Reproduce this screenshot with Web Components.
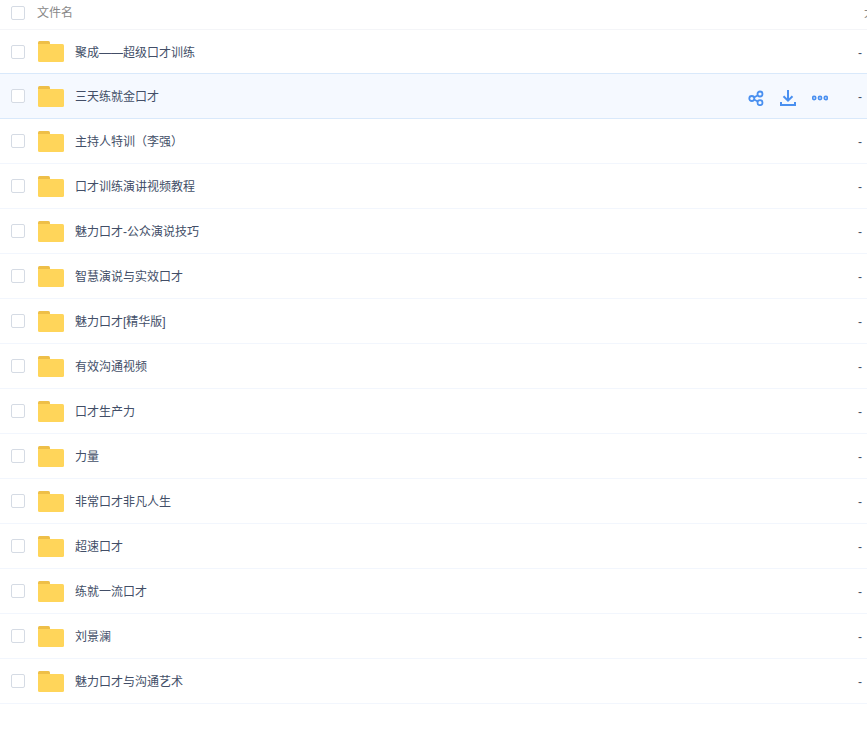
<!DOCTYPE html>
<html lang="zh-CN">
<head>
<meta charset="utf-8">
<title>文件列表</title>
<style>
  html, body { margin: 0; background: #fff; }
  body {
    overflow-x: hidden;
    color: #424e67;
    font: 12px/16px "Liberation Sans", "Noto Sans CJK SC", sans-serif;
  }
</style>
</head>
<body>
<file-list active="1">
  <span slot="name-heading">文件名</span>
  <span slot="size-heading">大小</span>
</file-list>

<script>
(function (global) {
  'use strict';

  var files = [
    '聚成——超级口才训练',
    '三天练就金口才',
    '主持人特训（李强）',
    '口才训练演讲视频教程',
    '魅力口才-公众演说技巧',
    '智慧演说与实效口才',
    '魅力口才[精华版]',
    '有效沟通视频',
    '口才生产力',
    '力量',
    '非常口才非凡人生',
    '超速口才',
    '练就一流口才',
    '刘景澜',
    '魅力口才与沟通艺术'
  ];

  class FolderIcon extends HTMLElement {
    constructor() {
      super();
      this.attachShadow({ mode: 'open' }).innerHTML = [
        '<style>',
        ':host{display:block;flex:none;width:26px;height:21px}',
        'svg{display:block}',
        '</style>',
        '<svg width="26" height="21" viewBox="0 0 26 21" aria-hidden="true">',
        '<path fill="#eebf48" d="M0 4V1.5Q0 0 1.5 0H10.5Q12 0 12 1.5V4Z"/>',
        '<path fill="#ffd55a" d="M0 3H24.5Q26 3 26 4.5V19.5Q26 21 24.5 21H1.5Q0 21 0 19.5Z"/>',
        '</svg>'
      ].join('');
    }
  }

  class FileCheckbox extends HTMLElement {
    connectedCallback() {
      if (this.shadowRoot) return;
      this.attachShadow({ mode: 'open' }).innerHTML = [
        '<style>',
        ':host{display:block;flex:none;width:14px;height:14px}',
        'input{appearance:none;box-sizing:border-box;display:block;width:14px;height:14px;margin:0;border:1px solid #d5dbe4;border-radius:2px;background:#fff;cursor:pointer}',
        'input:checked{border-color:#4a90f0;background:#4a90f0}',
        'input:focus-visible{outline:2px solid #9cc5ff;outline-offset:1px}',
        '</style>',
        '<input type="checkbox">'
      ].join('');
      this.shadowRoot.querySelector('input').setAttribute('aria-label', this.getAttribute('label') || '');
    }
  }

  class FileActions extends HTMLElement {
    constructor() {
      super();
      this.attachShadow({ mode: 'open' }).innerHTML = [
        '<style>',
        ':host{display:flex;gap:16px;padding-top:3px}',
        'button{display:block;width:16px;height:16px;margin:0;padding:0;border:0;background:none;color:#4a90f0;cursor:pointer}',
        'svg{display:block;fill:none;stroke:currentColor;stroke-width:2}',
        '</style>',
        '<button type="button" aria-label="分享"><svg width="16" height="16" viewBox="0 0 16 16">',
        '<g stroke-width="1.8"><circle cx="3.8" cy="8.5" r="2.5"/><circle cx="12" cy="4" r="2.5"/><circle cx="12" cy="12.7" r="2.5"/>',
        '<path d="M6 7.5L9.8 5.2M6 9.5L9.8 11.5"/></g>',
        '</svg></button>',
        '<button type="button" aria-label="下载"><svg width="16" height="16" viewBox="0 0 16 16">',
        '<path d="M8 0V10M3.5 6.2L8 10.7L12.5 6.2M1 12V15H15V12"/>',
        '</svg></button>',
        '<button type="button" aria-label="更多"><svg width="16" height="16" viewBox="0 0 16 16">',
        '<g stroke-width="1.6"><circle cx="2.2" cy="8" r="1.6"/><circle cx="8" cy="8" r="1.6"/><circle cx="13.8" cy="8" r="1.6"/></g>',
        '</svg></button>'
      ].join('');
    }
  }

  class FileList extends HTMLElement {
    connectedCallback() {
      if (this.shadowRoot) return;
      this.attachShadow({ mode: 'open' });
      this.render();
    }

    render() {
      var active = Number(this.getAttribute('active'));
      var rows = files.map(function (name, index) {
        var on = index === active;
        return [
          '<tr' + (on ? ' class="active"' : '') + '>',
          '<td><div class="cell">',
          '<file-checkbox label="' + name + '"></file-checkbox>',
          '<folder-icon></folder-icon>',
          '<a href="#">' + name + '</a>',
          on ? '<file-actions></file-actions>' : '',
          '</div></td>',
          '<td class="size">-</td>',
          '</tr>'
        ].join('');
      }).join('');

      this.shadowRoot.innerHTML = [
        '<style>',
        ':host{display:block;overflow:hidden}',
        '*{box-sizing:border-box}',
        // the size column runs on past the right edge of the window
        'table{width:calc(100% + 120px);border-spacing:0;table-layout:fixed}',
        'th,td{padding:0;border-bottom:1px solid #f2f6fd;text-align:left;font-weight:400}',
        'th{height:30px;padding-bottom:3px;border-color:#f4f5f8;color:#888}',
        'td{height:45px}',
        'tbody tr:first-child td{height:44px}',
        '.size{width:129px}',
        'td.size{padding-top:2px}',
        'th.size{padding-left:6px}',
        '.cell{display:flex;align-items:center;gap:12px;padding-left:11px}',
        'td .cell{gap:11px}',
        'folder-icon{margin-left:2px}',
        'a{flex:1;padding-top:2px;color:inherit;text-decoration:none}',
        'a:hover{color:#4a90f0}',
        'file-actions{padding-right:30px}',
        '.active td{border-color:#d9e9fb;background:#f5f9ff}',
        'tr:has(+ .active) td{border-color:#d9e9fb}',
        '</style>',
        '<table>',
        '<thead><tr>',
        '<th scope="col"><div class="cell"><file-checkbox label="全选"></file-checkbox><slot name="name-heading"></slot></div></th>',
        '<th scope="col" class="size"><slot name="size-heading"></slot></th>',
        '</tr></thead>',
        '<tbody>' + rows + '</tbody>',
        '</table>'
      ].join('');
    }
  }

  global.customElements.define('folder-icon', FolderIcon);
  global.customElements.define('file-checkbox', FileCheckbox);
  global.customElements.define('file-actions', FileActions);
  global.customElements.define('file-list', FileList);
})(window);
</script>
</body>
</html>
